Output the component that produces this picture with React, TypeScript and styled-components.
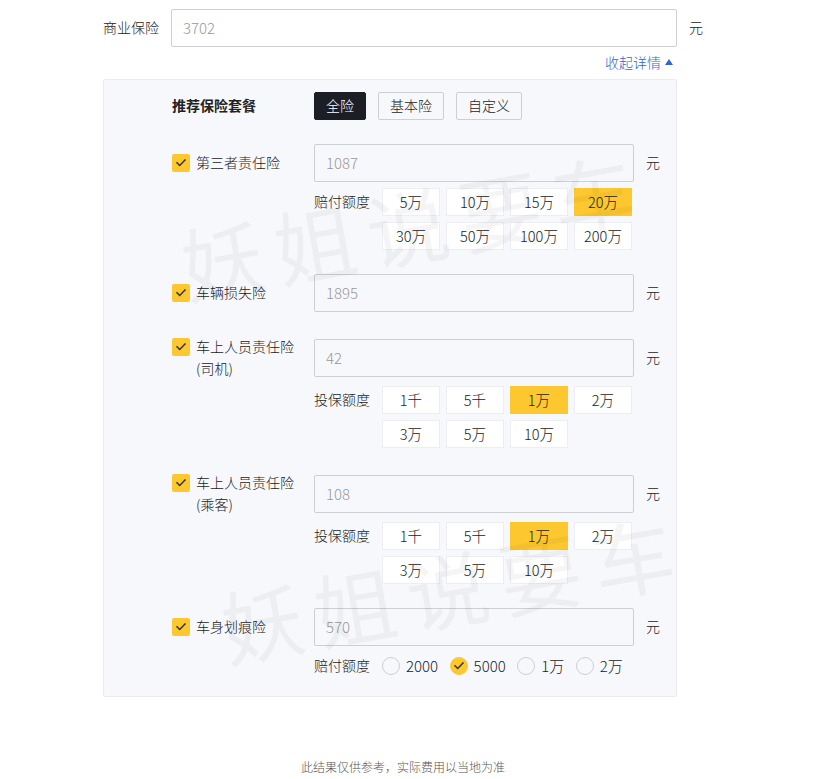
import React from 'react';
import styled, { createGlobalStyle } from 'styled-components';

const GlobalStyle = createGlobalStyle`
  body {
    margin: 0;
    background: #fff;
    color: #222;
    font-family: "Noto Sans CJK SC", "Noto Sans", sans-serif;
    font-size: 14px;
    font-weight: 300;
  }
`;

const Page = styled.div`
  width: 827px;
  height: 779px;
  padding: 9px 0 0 103px;
  box-sizing: border-box;
  overflow: hidden;
`;

const TopRow = styled.div`
  display: flex;
  align-items: center;
`;

const TopLabel = styled.label`
  width: 68px;
  padding-bottom: 2px;
`;

const Amount = styled.input<{ $width: number }>`
  width: ${p => p.$width}px;
  height: 38px;
  box-sizing: border-box;
  padding: 0 11px 2px;
  border: 1px solid #cdcfd3;
  border-radius: 2px;
  background: transparent;
  color: #999;
  font: inherit;
  font-size: 15px;
  outline: none;
`;

const Unit = styled.span`
  margin-left: 12px;
  padding-bottom: 2px;
`;

const ToggleLink = styled.a`
  display: flex;
  justify-content: flex-end;
  align-items: center;
  gap: 4px;
  width: 574px;
  height: 32px;
  padding: 0 4px 2px 0;
  box-sizing: border-box;
  color: #2f66d0;
  line-height: 30px;
`;

const Caret = styled.i`
  width: 0;
  height: 0;
  border-left: 4px solid transparent;
  border-right: 4px solid transparent;
  border-bottom: 6px solid #2f66d0;
`;

const Panel = styled.section`
  position: relative;
  width: 574px;
  height: 618px;
  box-sizing: border-box;
  padding: 12px 0 0 68px;
  border: 1px solid #e9ebef;
  border-radius: 2px;
  background: #f6f8fc;
`;

const Watermark = styled.div<{ $top: number; $left: number }>`
  position: absolute;
  top: ${p => p.$top}px;
  left: ${p => p.$left}px;
  font-size: 82px;
  font-weight: 400;
  letter-spacing: 12px;
  line-height: 1;
  white-space: nowrap;
  color: rgba(0, 0, 0, 0.04);
  transform: rotate(-10deg);
  pointer-events: none;
`;

const PlanRow = styled.div`
  display: flex;
  align-items: center;
  height: 28px;
  margin-bottom: 24px;
`;

const PlanTitle = styled.strong`
  width: 142px;
  padding-bottom: 2px;
  font-weight: 700;
`;

const PlanButton = styled.button<{ $active?: boolean }>`
  height: 28px;
  margin-right: 12px;
  padding: 0 11px 2px;
  border: 1px solid ${p => (p.$active ? '#1c1e26' : '#cdcfd3')};
  border-radius: 2px;
  background: ${p => (p.$active ? '#1c1e26' : 'transparent')};
  color: ${p => (p.$active ? '#fff' : '#222')};
  font: inherit;
`;

const Field = styled.div<{ $gap: number }>`
  display: grid;
  grid-template-columns: 142px 1fr;
  margin-bottom: ${p => p.$gap}px;
`;

const FieldLabel = styled.div<{ $multi?: boolean }>`
  display: flex;
  gap: 6px;
  margin-top: ${p => (p.$multi ? -3 : 8)}px;
  line-height: 22px;
`;

const LabelText = styled.span`
  margin-top: -1px;
`;

const Checkbox = styled.span`
  flex: none;
  display: flex;
  align-items: center;
  justify-content: center;
  width: 18px;
  height: 18px;
  margin-top: 2px;
  border-radius: 2px;
  background: #fdc82f;
`;

const AmountRow = styled.div`
  display: flex;
  align-items: center;
`;

const Options = styled.div<{ $top: number }>`
  display: grid;
  grid-template-columns: 62px repeat(4, 58px);
  gap: 6px;
  margin-top: ${p => p.$top}px;
`;

const OptionsTitle = styled.span`
  grid-row: span 2;
  line-height: 26px;
`;

const Option = styled.button<{ $active?: boolean }>`
  height: 28px;
  padding: 0 0 2px;
  border: 1px solid ${p => (p.$active ? '#fdc82f' : '#eceef1')};
  background: ${p => (p.$active ? '#fdc82f' : '#fff')};
  color: #222;
  font: inherit;
  font-size: 14.5px;
`;

const RadioRow = styled.div`
  display: flex;
  align-items: center;
  height: 22px;
  margin-top: 9px;
`;

const RadioTitle = styled.span`
  margin-right: 12px;
  padding-bottom: 2px;
`;

const RadioItem = styled.label`
  display: flex;
  align-items: center;
  gap: 6px;
  margin-right: 11.5px;
  font-size: 15px;
`;

const RadioText = styled.span`
  padding-bottom: 2px;
`;

const RadioDot = styled.span<{ $on?: boolean }>`
  display: flex;
  align-items: center;
  justify-content: center;
  width: 18px;
  height: 18px;
  box-sizing: border-box;
  border-radius: 50%;
  border: 1px solid ${p => (p.$on ? '#fdc82f' : '#cdcfd3')};
  background: ${p => (p.$on ? '#fdc82f' : 'transparent')};
`;

const Footer = styled.p`
  width: 600px;
  margin: 60px 0 0;
  text-align: center;
  color: #555;
  font-size: 12px;
  line-height: 20px;
`;

const Tick = () => (
  <svg width="12" height="12" viewBox="0 0 12 12" fill="none">
    <path d="M1.5 5.2 4.7 8.5l5.8-6" stroke="#333" strokeWidth="1.5" />
  </svg>
);

type Group = { title: string; values: string[]; active: string; top: number };
type Row = { label: string; sub?: string; amount: string; gap: number; group?: Group };

const coverFine = ['1千', '5千', '1万', '2万', '3万', '5万', '10万'];

const rows: Row[] = [
  {
    label: '第三者责任险',
    amount: '1087',
    gap: 24,
    group: {
      title: '赔付额度',
      values: ['5万', '10万', '15万', '20万', '30万', '50万', '100万', '200万'],
      active: '20万',
      top: 6,
    },
  },
  { label: '车辆损失险', amount: '1895', gap: 27 },
  {
    label: '车上人员责任险',
    sub: '(司机)',
    amount: '42',
    gap: 27,
    group: { title: '投保额度', values: coverFine, active: '1万', top: 9 },
  },
  {
    label: '车上人员责任险',
    sub: '(乘客)',
    amount: '108',
    gap: 24,
    group: { title: '投保额度', values: coverFine, active: '1万', top: 9 },
  },
];

const radios = ['2000', '5000', '1万', '2万'];

const FieldHead = ({ row }: { row: Row }) => (
  <FieldLabel $multi={!!row.sub}>
    <Checkbox>
      <Tick />
    </Checkbox>
    <LabelText>
      {row.label}
      {row.sub && <br />}
      {row.sub}
    </LabelText>
  </FieldLabel>
);

const App = () => (
  <Page>
    <GlobalStyle />
    <TopRow>
      <TopLabel>商业保险</TopLabel>
      <Amount $width={506} value="3702" readOnly />
      <Unit>元</Unit>
    </TopRow>
    <ToggleLink>
      收起详情
      <Caret />
    </ToggleLink>
    <Panel>
      <PlanRow>
        <PlanTitle>推荐保险套餐</PlanTitle>
        <PlanButton $active>全险</PlanButton>
        <PlanButton>基本险</PlanButton>
        <PlanButton>自定义</PlanButton>
      </PlanRow>
      {rows.map((row, i) => (
        <Field key={i} $gap={row.gap}>
          <FieldHead row={row} />
          <div>
            <AmountRow>
              <Amount $width={320} value={row.amount} readOnly />
              <Unit>元</Unit>
            </AmountRow>
            {row.group && (
              <Options $top={row.group.top}>
                <OptionsTitle>{row.group.title}</OptionsTitle>
                {row.group.values.map(v => (
                  <Option key={v} $active={v === row.group!.active}>
                    {v}
                  </Option>
                ))}
              </Options>
            )}
          </div>
        </Field>
      ))}
      <Field $gap={0}>
        <FieldHead row={{ label: '车身划痕险', amount: '570', gap: 0 }} />
        <div>
          <AmountRow>
            <Amount $width={320} value="570" readOnly />
            <Unit>元</Unit>
          </AmountRow>
          <RadioRow>
            <RadioTitle>赔付额度</RadioTitle>
            {radios.map(r => (
              <RadioItem key={r}>
                <RadioDot $on={r === '5000'}>{r === '5000' && <Tick />}</RadioDot>
                <RadioText>{r}</RadioText>
              </RadioItem>
            ))}
          </RadioRow>
        </div>
      </Field>
      <Watermark $top={103} $left={74}>妖姐说要车</Watermark>
      <Watermark $top={466} $left={114}>妖姐说要车</Watermark>
    </Panel>
    <Footer>此结果仅供参考，实际费用以当地为准</Footer>
  </Page>
);

export default App;
